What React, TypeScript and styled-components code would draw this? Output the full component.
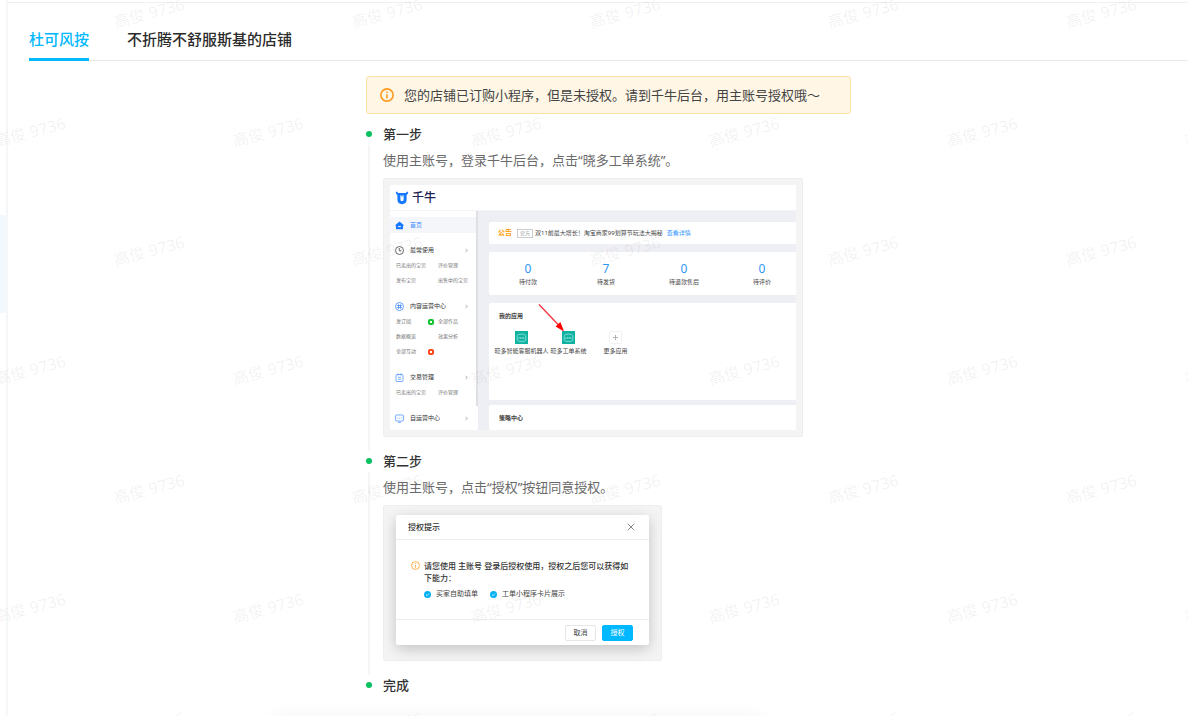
import React from "react";
import styled, { createGlobalStyle } from "styled-components";

const GlobalStyle = createGlobalStyle`
  *, *::before, *::after { box-sizing: border-box; }
  body {
    margin: 0;
    background: #fff;
    color: #333;
    font: 13px/20px "Noto Sans", "Noto Sans CJK SC", sans-serif;
  }
  button { font-family: inherit; cursor: pointer; }
  a { color: inherit; text-decoration: none; }
  ol, ul { list-style: none; margin: 0; padding: 0; }
  h2, h3, p { margin: 0; }
  svg { display: block; flex: none; }
`;

/* ---------- page frame ---------- */

const Page = styled.div`
  position: relative;
  display: flex;
  min-height: 100vh;
  overflow: hidden;
`;

const NavEdge = styled.aside`
  flex: none;
  width: 8px;
  padding-top: 215px;
  border-right: 2px solid #f6f7f8;
`;

const NavActive = styled.div`
  height: 98px;
  background: #f3f8fd;
`;

const Main = styled.main`
  flex: 1;
  min-width: 0;
  margin-top: 2px;
  padding-left: 21px;
  border-top: 1px solid #f0f0f0;
`;

const TabBar = styled.div`
  display: flex;
  gap: 38px;
  height: 58px;
  border-bottom: 1px solid #e8e8e8;
`;

const Tab = styled.button<{ $active?: boolean }>`
  height: 58px;
  padding: 16px 0 0;
  border: 0;
  border-bottom: 3px solid ${(p) => (p.$active ? "#00b8ff" : "transparent")};
  background: none;
  color: ${(p) => (p.$active ? "#00b8ff" : "#2b2b2b")};
  font-size: 15px;
  font-weight: 500;
  line-height: 24px;
  white-space: nowrap;
`;

const Column = styled.div`
  width: 100%;
  max-width: 485px;
  margin: 0 auto;
  padding: 15px 0 20px;
`;

const Alert = styled.div`
  display: flex;
  align-items: center;
  gap: 10px;
  height: 38px;
  margin-bottom: 10px;
  padding: 0 13px;
  border: 1px solid #ffe2a3;
  border-radius: 3px;
  background: #fff6e5;
  color: #444;
`;

/* ---------- timeline ---------- */

const Step = styled.li`
  display: grid;
  grid-template-columns: 6px 1fr;
  column-gap: 11px;
`;

const Rail = styled.div`
  display: flex;
  flex-direction: column;
  align-items: center;
  gap: 8px;
  padding-top: 7px;
`;

const Dot = styled.span`
  flex: none;
  width: 6px;
  height: 6px;
  border-radius: 50%;
  background: #07c160;
`;

const Line = styled.span`
  flex: 1;
  width: 2px;
  background: #f5f5f5;
`;

const StepBody = styled.div<{ $last?: boolean }>`
  min-width: 0;
  padding-bottom: ${(p) => (p.$last ? "0" : "14px")};
`;

const StepTitle = styled.h2`
  font-size: 13px;
  line-height: 20px;
  font-weight: 500;
`;

const StepText = styled.p`
  margin: 6px 0 8px;
  color: #6a6a6a;
`;

const Figure = styled.div<{ $width: number; $pad: string }>`
  width: ${(p) => p.$width}px;
  max-width: 100%;
  padding: ${(p) => p.$pad};
  border: 1px solid #eee;
  border-radius: 2px;
  background: #f4f4f4;
`;

/* ---------- shop console preview ---------- */

const Console = styled.div`
  background: #eeeff4;
  font-size: 6px;
  line-height: 10px;
  color: #444;
`;

const ConsoleTop = styled.div`
  display: flex;
  align-items: center;
  gap: 3px;
  height: 26px;
  padding-left: 5px;
  background: #fff;
  color: #1c2350;
  font-size: 12px;
  font-weight: 500;
  border-bottom: 1px solid #f3f4f7;
`;

const ConsoleBody = styled.div`
  display: flex;
  gap: 11px;
`;

const Menu = styled.nav`
  position: relative;
  flex: none;
  width: 88px;
  height: 219px;
  padding-top: 6px;
  background: #fff;
`;

const ScrollThumb = styled.span`
  position: absolute;
  top: 0;
  right: 0;
  width: 2px;
  height: 195px;
  background: #dfe0e3;
`;

const MenuHead = styled.a<{ $active?: boolean }>`
  display: grid;
  grid-template-columns: 9px 1fr auto;
  align-items: center;
  column-gap: 6px;
  height: 16px;
  margin-right: 2px;
  padding: 0 8px 0 5px;
  background: ${(p) => (p.$active ? "#f5f6f9" : "none")};
  color: ${(p) => (p.$active ? "#3d8bff" : "#333")};
`;

const MenuGroup = styled.div`
  margin-top: 9px;
  & + & { margin-top: 10px; }
`;

const MenuLinks = styled.div`
  display: grid;
  grid-template-columns: 42px 1fr;
  padding-left: 6px;
  font-size: 5px;
  line-height: 15px;
  color: #777;
  white-space: nowrap;
`;

const MenuLink = styled.a`
  display: flex;
  justify-content: space-between;
  align-items: center;
  padding-right: 4px;
`;

const Badge = styled.i<{ $color: string }>`
  width: 6px;
  height: 6px;
  border: 2px solid ${(p) => p.$color};
  border-radius: 2px;
  background: #fff;
`;

const Cards = styled.div`
  flex: 1;
  min-width: 0;
  padding-top: 11px;
`;

const Card = styled.section<{ $height: number; $gap?: number }>`
  position: relative;
  height: ${(p) => p.$height}px;
  margin-bottom: ${(p) => p.$gap ?? 0}px;
  border-radius: 2px 0 0 2px;
  background: #fff;
`;

const Notice = styled.div`
  display: flex;
  align-items: center;
  height: 22px;
  padding-left: 9px;
  white-space: nowrap;
`;

const NoticeLabel = styled.strong`
  margin-right: 5px;
  color: #ff9a00;
  font-size: 7px;
`;

const NoticeTag = styled.span`
  width: 16px;
  height: 9px;
  margin-right: 2px;
  border: 1px solid #ccc;
  color: #999;
  font-size: 5px;
  line-height: 7px;
  text-align: center;
`;

const NoticeLink = styled.a`
  margin-left: 4px;
  color: #2f95ff;
`;

const Stats = styled.div`
  display: grid;
  grid-template-columns: repeat(4, 78px);
  padding-top: 9px;
  text-align: center;
`;

const StatValue = styled.div`
  color: #2f95f5;
  font-size: 12px;
  line-height: 16px;
`;

const CardTitle = styled.h3`
  padding: 8px 0 0 10px;
  font-size: 6px;
  line-height: 10px;
  font-weight: 700;
`;

const Apps = styled.div`
  display: grid;
  grid-template-columns: repeat(3, 47px);
  padding: 10px 0 0 9px;
`;

const AppItem = styled.a`
  display: flex;
  flex-direction: column;
  align-items: center;
  gap: 2px;
  white-space: nowrap;
`;

const Arrow = styled.svg`
  position: absolute;
  left: 49px;
  top: 1px;
`;

/* ---------- authorisation dialog preview ---------- */

const Dialog = styled.div`
  border-radius: 2px;
  background: #fff;
  box-shadow: 0 4px 14px rgba(0, 0, 0, 0.2);
  font-size: 8px;
  line-height: 12px;
`;

const DialogHead = styled.div`
  display: flex;
  align-items: center;
  justify-content: space-between;
  height: 25px;
  padding: 0 14px 0 12px;
  border-bottom: 1px solid #eee;
  font-weight: 500;
`;

const CloseButton = styled.button`
  padding: 0;
  border: 0;
  background: none;
  color: #888;
`;

const DialogBody = styled.div`
  display: flex;
  gap: 4px;
  height: 79px;
  padding: 20px 14px 0 15px;
  & > svg { margin-top: 1px; }
`;

const Message = styled.p`
  padding-right: 4px;
  font-weight: 500;
`;

const Abilities = styled.ul`
  display: flex;
  gap: 12px;
  margin-top: 4px;
  font-size: 7px;
  color: #444;
`;

const Ability = styled.li`
  display: flex;
  align-items: center;
  gap: 5px;
`;

const DialogFoot = styled.div`
  display: flex;
  align-items: center;
  justify-content: flex-end;
  gap: 6px;
  height: 26px;
  padding-right: 16px;
  border-top: 1px solid #eee;
`;

const DialogButton = styled.button<{ $primary?: boolean }>`
  width: 31px;
  height: 16px;
  padding: 0;
  border: 1px solid ${(p) => (p.$primary ? "#00b8ff" : "#e6e6e6")};
  border-radius: 2px;
  background: ${(p) => (p.$primary ? "#00b8ff" : "#fff")};
  color: ${(p) => (p.$primary ? "#fff" : "#444")};
  font-size: 7px;
  line-height: 12px;
`;

const FloatingShadow = styled.div`
  position: absolute;
  left: 23%;
  bottom: -10px;
  width: 41%;
  height: 10px;
  box-shadow: 0 0 16px rgba(0, 0, 0, 0.06);
`;

/* ---------- watermark ---------- */

const WatermarkLayer = styled.div`
  position: absolute;
  inset: 0;
  overflow: hidden;
  pointer-events: none;
`;

const WatermarkRow = styled.div<{ $shift: boolean }>`
  display: flex;
  height: 119px;
  margin-left: ${(p) => (p.$shift ? "-89px" : "30px")};
`;

const Mark = styled.span`
  flex: none;
  width: 238px;
  height: 26px;
  color: rgba(60, 60, 60, 0.07);
  font-size: 16px;
  line-height: 26px;
  text-align: center;
  transform: rotate(-15deg);
`;

const InfoIcon = ({ size, width }: { size: number; width: number }) => (
  <svg width={size} height={size} viewBox="0 0 16 16" fill="none" stroke="#ff9a1f" strokeWidth={width}>
    <circle cx="8" cy="8" r="7" />
    <path d="M8 7v5M8 4v1.6" />
  </svg>
);

const BullLogo = () => (
  <svg width="14" height="14" viewBox="0 0 14 14">
    <path
      d="M.8.8h1.6c.1.8.5 1.2 1.4 1.2h6.4c.9 0 1.3-.4 1.4-1.2h1.6c0 1.7-.6 2.7-1.6 3.2v4.6c0 3-1.6 4.6-4.6 4.6S2.4 11.600 2.400 8.600V4C1.400 3.500.8 2.500.8.800z"
      fill="#1677ff"
    />
    <path d="M5.400 4.200h1v1.200h1.200V4.200h1v4.200c0 1-.6 1.600-1.600 1.600s-1.600-.6-1.600-1.600z" fill="#fff" />
  </svg>
);

const HomeIcon = () => (
  <svg width="9" height="9" viewBox="0 0 9 9">
    <path d="M4.5.6 8.6 4v.7H8v3.1a.5.5 0 0 1-.5.5h-6a.5.5 0 0 1-.5-.5V4.7H.4V4z" fill="#1677ff" />
    <path d="M3 5.6h3" stroke="#fff" strokeWidth=".9" />
  </svg>
);

const ClockIcon = () => (
  <svg width="9" height="9" viewBox="0 0 9 9" fill="none" stroke="#444" strokeWidth=".8">
    <circle cx="4.5" cy="4.5" r="4" />
    <path d="M4.3 2v2.8h2.2" />
  </svg>
);

const ContentIcon = () => (
  <svg width="9" height="9" viewBox="0 0 9 9" fill="none" stroke="#3d8bff" strokeWidth=".8">
    <circle cx="4.5" cy="4.5" r="4" />
    <path d="M3.5 2.4v4.2M5.5 2.4v4.2M2.2 3.5h4.6M2.2 5.5h4.6" />
  </svg>
);

const TradeIcon = () => (
  <svg width="9" height="9" viewBox="0 0 9 9" fill="none" stroke="#3d8bff" strokeWidth=".7">
    <rect x="1" y="1.5" width="7" height="7" rx="1" />
    <path d="M3 .5v2M6 .5v2M3 4.3h3M3 6.3h3" />
  </svg>
);

const ScreenIcon = () => (
  <svg width="9" height="9" viewBox="0 0 9 9" fill="none" stroke="#3d8bff" strokeWidth=".7">
    <rect x=".6" y="1" width="7.8" height="6" rx=".8" />
    <path d="M3 8.4h3M2.6 4h.8M4.2 4h.8M5.8 4h.8" />
  </svg>
);

const Chevron = () => (
  <svg width="3" height="5" viewBox="0 0 3 5" fill="none" stroke="#888" strokeWidth=".7">
    <path d="M.6.8 2.2 2.5.6 4.2" />
  </svg>
);

const AppIcon = () => (
  <svg width="13" height="13" viewBox="0 0 13 13" fill="none">
    <rect width="13" height="13" fill="#10b2a2" />
    <path d="M2.2 4.6 4 3.2h5l1.8 1.4v4.6L9 10.4H4L2.2 9.2z" stroke="#a8ece4" strokeWidth=".7" />
    <path d="M3.4 7h6.2" stroke="#d5f7f3" strokeWidth=".9" strokeDasharray="1.2 .4" />
  </svg>
);

const MoreIcon = () => (
  <svg width="13" height="13" viewBox="0 0 13 13" fill="none">
    <rect x=".5" y=".5" width="12" height="12" rx="1" stroke="#f0f0f0" />
    <path d="M4 6.5h5M6.500 4v5" stroke="#aaa" strokeWidth=".9" />
  </svg>
);

const CheckIcon = () => (
  <svg width="7" height="7" viewBox="0 0 7 7" fill="none">
    <circle cx="3.5" cy="3.5" r="3.5" fill="#00b0f5" />
    <path d="m2 3.6 1.1 1 1.9-2" stroke="#fff" strokeWidth=".8" />
  </svg>
);

type LinkItem = { text: string; badge?: string };
const groups: { title: string; icon: React.ReactNode; links: LinkItem[] }[] = [
  {
    title: "最常使用",
    icon: <ClockIcon />,
    links: [{ text: "已卖出的宝贝" }, { text: "评价管理" }, { text: "发布宝贝" }, { text: "出售中的宝贝" }],
  },
  {
    title: "内容运营中心",
    icon: <ContentIcon />,
    links: [
      { text: "发订阅", badge: "#12c22f" },
      { text: "全部作品" },
      { text: "数据概览" },
      { text: "效果分析" },
      { text: "全部互动", badge: "#ff4a1c" },
    ],
  },
  { title: "交易管理", icon: <TradeIcon />, links: [{ text: "已卖出的宝贝" }, { text: "评价管理" }] },
  { title: "自运营中心", icon: <ScreenIcon />, links: [] },
];

const stats = [
  ["0", "待付款"],
  ["7", "待发货"],
  ["0", "待退款售后"],
  ["0", "待评价"],
];

const ConsolePreview = () => (
  <Figure $width={420} $pad="6px">
    <Console>
      <ConsoleTop>
        <BullLogo />
        千牛
      </ConsoleTop>
      <ConsoleBody>
        <Menu>
          <MenuHead href="#home" $active>
            <HomeIcon />
            首页
          </MenuHead>
          {groups.map((g) => (
            <MenuGroup key={g.title}>
              <MenuHead href="#group">
                {g.icon}
                {g.title}
                <Chevron />
              </MenuHead>
              <MenuLinks>
                {g.links.map((l) => (
                  <MenuLink href="#item" key={l.text}>
                    {l.text}
                    {l.badge && <Badge $color={l.badge} />}
                  </MenuLink>
                ))}
              </MenuLinks>
            </MenuGroup>
          ))}
          <ScrollThumb />
        </Menu>
        <Cards>
          <Card $height={22} $gap={8}>
            <Notice>
              <NoticeLabel>公告</NoticeLabel>
              <NoticeTag>官方</NoticeTag>
              双11前最大增长！淘宝商家99划算节玩法大揭秘
              <NoticeLink href="#detail">查看详情</NoticeLink>
            </Notice>
          </Card>
          <Card $height={43} $gap={8}>
            <Stats>
              {stats.map(([value, label]) => (
                <div key={label}>
                  <StatValue>{value}</StatValue>
                  {label}
                </div>
              ))}
            </Stats>
          </Card>
          <Card $height={97} $gap={5}>
            <CardTitle>我的应用</CardTitle>
            <Apps>
              <AppItem href="#robot">
                <AppIcon />
                晓多智能客服机器人
              </AppItem>
              <AppItem href="#ticket">
                <AppIcon />
                晓多工单系统
              </AppItem>
              <AppItem href="#more">
                <MoreIcon />
                更多应用
              </AppItem>
            </Apps>
            <Arrow width="28" height="29" viewBox="0 0 28 29">
              <path d="M1 .5 21 21.5" stroke="#f5333f" strokeWidth="1.3" />
              <path d="M26 27.5 17.6 22.4 22.4 18z" fill="#f00" />
            </Arrow>
          </Card>
          <Card $height={25}>
            <CardTitle>策略中心</CardTitle>
          </Card>
        </Cards>
      </ConsoleBody>
    </Console>
  </Figure>
);

const DialogPreview = () => (
  <Figure $width={279} $pad="9px 12px 15px 12px">
    <Dialog>
      <DialogHead>
        授权提示
        <CloseButton aria-label="关闭">
          <svg width="8" height="8" viewBox="0 0 8 8" stroke="currentColor" strokeWidth="1">
            <path d="m.8.8 6.4 6.4M7.2.8.8 7.2" />
          </svg>
        </CloseButton>
      </DialogHead>
      <DialogBody>
        <InfoIcon size={9} width={1.4} />
        <div>
          <Message>请您使用 主账号 登录后授权使用，授权之后您可以获得如下能力：</Message>
          <Abilities>
            <Ability>
              <CheckIcon />
              买家自助填单
            </Ability>
            <Ability>
              <CheckIcon />
              工单小程序卡片展示
            </Ability>
          </Abilities>
        </div>
      </DialogBody>
      <DialogFoot>
        <DialogButton>取消</DialogButton>
        <DialogButton $primary>授权</DialogButton>
      </DialogFoot>
    </Dialog>
  </Figure>
);

const Watermark = () => (
  <WatermarkLayer aria-hidden="true">
    {Array.from({ length: 7 }, (_, row) => (
      <WatermarkRow key={row} $shift={row % 2 === 1}>
        {Array.from({ length: 9 }, (_, col) => (
          <Mark key={col}>高俊 9736</Mark>
        ))}
      </WatermarkRow>
    ))}
  </WatermarkLayer>
);

export default function App() {
  return (
    <Page lang="zh-CN">
      <GlobalStyle />
      <NavEdge>
        <NavActive />
      </NavEdge>
      <Main>
        <TabBar role="tablist">
          <Tab role="tab" aria-selected="true" $active>
            杜可风按
          </Tab>
          <Tab role="tab" aria-selected="false">
            不折腾不舒服斯基的店铺
          </Tab>
        </TabBar>
        <Column>
          <Alert role="alert">
            <InfoIcon size={14} width={1.8} />
            您的店铺已订购小程序，但是未授权。请到千牛后台，用主账号授权哦～
          </Alert>
          <ol>
            <Step>
              <Rail>
                <Dot />
                <Line />
              </Rail>
              <StepBody>
                <StepTitle>第一步</StepTitle>
                <StepText>使用主账号，登录千牛后台，点击“晓多工单系统”。</StepText>
                <ConsolePreview />
              </StepBody>
            </Step>
            <Step>
              <Rail>
                <Dot />
                <Line />
              </Rail>
              <StepBody>
                <StepTitle>第二步</StepTitle>
                <StepText>使用主账号，点击“授权”按钮同意授权。</StepText>
                <DialogPreview />
              </StepBody>
            </Step>
            <Step>
              <Rail>
                <Dot />
              </Rail>
              <StepBody $last>
                <StepTitle>完成</StepTitle>
              </StepBody>
            </Step>
          </ol>
        </Column>
      </Main>
      <FloatingShadow />
      <Watermark />
    </Page>
  );
}
